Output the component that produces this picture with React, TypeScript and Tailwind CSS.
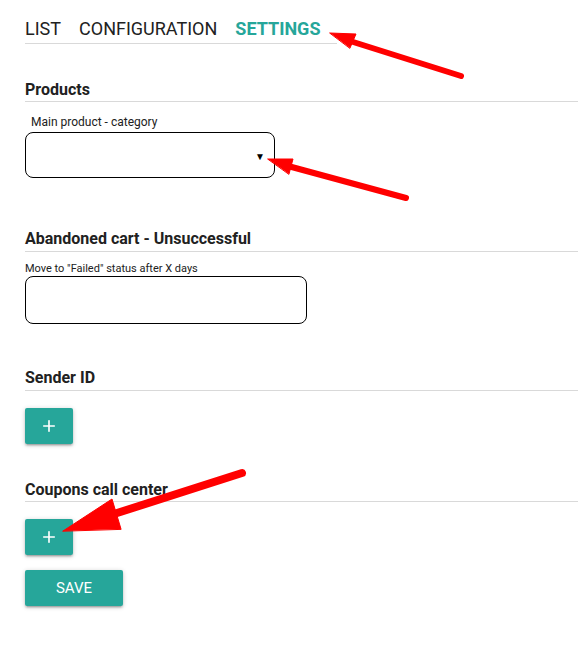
import { Plus } from "lucide-react";

const teal = "bg-[#26a69a]";

function Heading({ children, className = "" }: { children: string; className?: string }) {
  return (
    <div
      className={`border-b border-[#d9d9d9] text-[16px] leading-[20px] font-bold text-[#212121] ${className}`}
    >
      {children}
    </div>
  );
}

function AddButton({ className = "" }: { className?: string }) {
  return (
    <button
      type="button"
      className={`flex h-[36px] w-[48px] items-center justify-center rounded-[2px] ${teal} text-white shadow-[0_2px_2px_0_rgba(0,0,0,0.14),0_3px_1px_-2px_rgba(0,0,0,0.12),0_1px_5px_0_rgba(0,0,0,0.2)] ${className}`}
    >
      <Plus size={18} strokeWidth={2.2} />
    </button>
  );
}

function Arrows() {
  return (
    <svg
      className="pointer-events-none absolute left-0 top-0"
      width={578}
      height={647}
      viewBox="0 0 578 647"
    >
      <g fill="#ff0000" stroke="#ff0000" strokeLinecap="round" strokeLinejoin="round">
        <line x1={350} y1={41} x2={461} y2={76} strokeWidth={6} />
        <polygon points="330,33 356,34 350,48" strokeWidth={1} />
        <line x1={288} y1={166} x2={406} y2={198} strokeWidth={6} />
        <polygon points="268,159 293,159 289,174" strokeWidth={1} />
        <line x1={114} y1={514} x2={242} y2={473} strokeWidth={8} />
        <polygon points="63,531 112,499 121,529" strokeWidth={1} />
      </g>
    </svg>
  );
}

export default function App() {
  return (
    <div
      className="relative h-[647px] w-[578px] overflow-hidden bg-white pl-[25px]"
      style={{ fontFamily: "Roboto, 'Liberation Sans', sans-serif" }}
    >
      <div className="flex w-[312px] gap-[18px] border-b border-[#d9d9d9] pt-[18px] pb-[3px] text-[18px] leading-[22px] text-[#212121]">
        <span>LIST</span>
        <span>CONFIGURATION</span>
        <span className="font-bold text-[#26a69a]">SETTINGS</span>
      </div>

      <Heading className="mt-[36px] pb-[1px]">Products</Heading>
      <div className="mt-[13px] pl-[6px] text-[12px] leading-[14px] text-[#212121]">
        Main product - category
      </div>
      <div className="mt-[3px] flex h-[46px] w-[250px] items-center justify-end rounded-[8px] border border-black pr-[9px] pt-[4px]">
        <span className="text-[10px] leading-none text-black">▼</span>
      </div>

      <Heading className="mt-[51px] pb-[2px]">Abandoned cart - Unsuccessful</Heading>
      <div className="mt-[10px] text-[11px] leading-[13px] text-[#212121]">
        Move to "Failed" status after X days
      </div>
      <div className="mt-[1px] h-[48px] w-[282px] rounded-[8px] border border-black" />

      <Heading className="mt-[44px] pb-[2px]">Sender ID</Heading>
      <AddButton className="mt-[17px]" />

      <Heading className="mt-[36px] pb-[1px]">Coupons call center</Heading>
      <AddButton className="mt-[17px]" />

      <button
        type="button"
        className={`mt-[15px] flex h-[36px] w-[98px] items-center justify-center rounded-[2px] ${teal} text-[15px] font-normal text-white shadow-[0_2px_2px_0_rgba(0,0,0,0.14),0_3px_1px_-2px_rgba(0,0,0,0.12),0_1px_5px_0_rgba(0,0,0,0.2)]`}
      >
        SAVE
      </button>

      <Arrows />
    </div>
  );
}
